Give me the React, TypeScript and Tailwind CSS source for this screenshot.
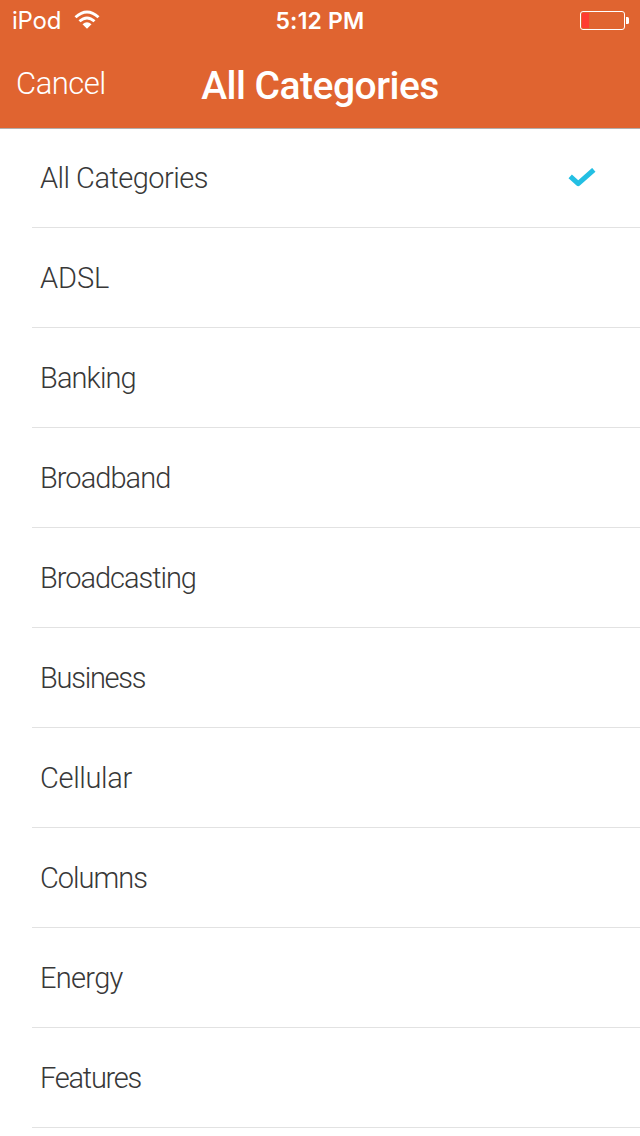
const categories = [
  { name: 'All Categories', tracking: 'tracking-[-0.53px]' },
  { name: 'ADSL', tracking: 'tracking-[-0.1px]' },
  { name: 'Banking', tracking: 'tracking-[-0.9px]' },
  { name: 'Broadband', tracking: 'tracking-[-0.95px]' },
  { name: 'Broadcasting', tracking: 'tracking-[-1.03px]' },
  { name: 'Business', tracking: 'tracking-[-1.25px]' },
  { name: 'Cellular', tracking: 'tracking-[-0.35px]' },
  { name: 'Columns', tracking: 'tracking-[-1px]' },
  { name: 'Energy', tracking: 'tracking-[-0.7px]' },
  { name: 'Features', tracking: 'tracking-[-1.25px]' },
];

function WifiIcon() {
  return (
    <svg className="mt-[10px] ml-[13px] h-5 w-[26px] shrink-0" viewBox="0 0 26 20" fill="none" stroke="#fff" strokeWidth="2.9">
      <path d="M1.5 7.3 Q13 -3.3 24.5 7.3" />
      <path d="M5.5 11.3 Q13 4.5 20.5 11.3" />
      <path d="M8.5 14.2 Q13 10.2 17.5 14.2 L13 18.8 Z" fill="#fff" stroke="none" />
    </svg>
  );
}

function BatteryIcon() {
  return (
    <svg className="mt-[10px] h-5 w-[50px]" viewBox="0 0 50 20" fill="none">
      <rect x="0.5" y="1.5" width="44" height="18" rx="2.5" stroke="#fff" />
      <rect x="2" y="3" width="7" height="15" fill="#ff3b30" />
      <path d="M46 7h1.5q1.5 0 1.5 1.5v4q0 1.5-1.5 1.5H46z" fill="#fff" />
    </svg>
  );
}

function CheckIcon() {
  return (
    <svg className="h-5 w-7" viewBox="0 0 28 20" fill="none" stroke="#23bfe3" strokeWidth="5" strokeLinejoin="round">
      <path d="M2.2 8.4 L10.2 15.7 L25.8 1.8" />
    </svg>
  );
}

export default function App() {
  return (
    <div className="flex h-[1136px] w-[640px] flex-col overflow-hidden bg-white font-['Roboto',sans-serif]">
      <header className="flex h-[129px] shrink-0 flex-col border-b border-[#b2aeac] bg-[#e06430] text-white">
        <div className="grid h-10 grid-cols-3 font-['Inter','Liberation_Sans',sans-serif]">
          <div className="flex pl-3">
            <span className="pt-[6px] text-[24px] leading-[30px] font-normal tracking-[-0.2px]">iPod</span>
            <WifiIcon />
          </div>
          <span className="pt-[6px] text-center text-[23px] leading-[30px] font-semibold tracking-[0.2px]">5:12 PM</span>
          <div className="flex justify-end pr-[10px]">
            <BatteryIcon />
          </div>
        </div>
        <div className="grid h-[88px] grid-cols-[160px_320px_160px]">
          <button className="flex items-start pt-[25px] pl-4 text-[31px] leading-[38px] font-light tracking-[-0.5px]">Cancel</button>
          <h1 className="pt-[22px] text-center text-[39px] leading-[48px] font-medium tracking-[-0.5px]">All Categories</h1>
        </div>
      </header>
      <ul className="-mt-px flex flex-col pl-8">
        {categories.map((category, index) => (
          <li
            key={category.name}
            className="flex h-[100px] shrink-0 items-center justify-between border-b border-[#e2e2e2] pr-11 pl-2 text-[29px] leading-[40px] font-[340] text-[#383838]"
          >
            <span className={`pt-px ${category.tracking}`}>{category.name}</span>
            {index === 0 && <CheckIcon />}
          </li>
        ))}
      </ul>
    </div>
  );
}
